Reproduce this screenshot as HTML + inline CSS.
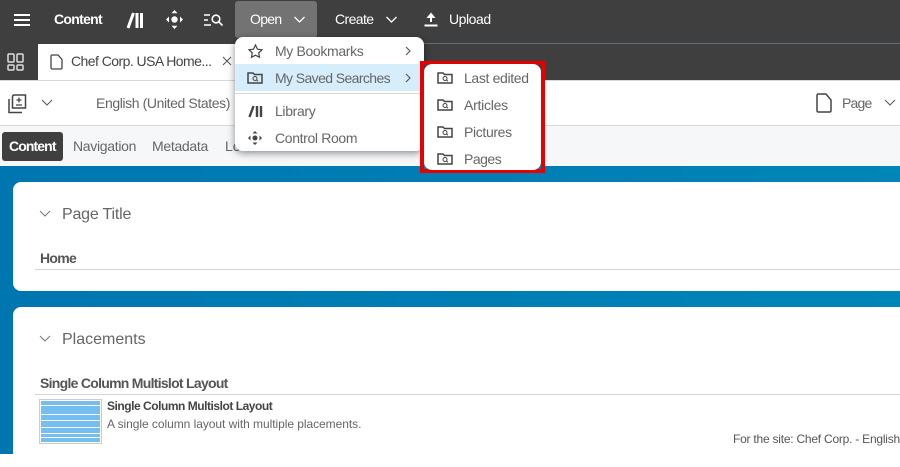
<!DOCTYPE html>
<html><head><meta charset="utf-8"><style>
html,body{margin:0;padding:0}
body{width:900px;height:454px;overflow:hidden;position:relative;background:#fff;font-family:"Liberation Sans",sans-serif;font-size:14px;color:#555}
.a{position:absolute;white-space:nowrap}
.t{position:absolute;white-space:nowrap;line-height:18px}
svg{position:absolute;overflow:visible}
.w{color:#fff}
.m{color:#666;font-size:14px;letter-spacing:-.35px}
</style></head><body>
<div class="a" style="left:0;top:0;width:900px;height:80px;background:#3f3f3f"></div>
<div class="a" style="left:240px;top:43px;width:660px;height:1px;background:#5f6f7c"></div>
<div class="a" style="left:38px;top:44px;width:205px;height:37px;background:#fff"></div>
<div class="a" style="left:0;top:80px;width:900px;height:1px;background:#d8d8d8"></div>
<div class="a" style="left:0;top:125px;width:900px;height:1px;background:#d8d8d8"></div>
<div class="a" style="left:0;top:126px;width:900px;height:40px;background:#f6f7f9"></div>
<div class="a" style="left:0;top:166px;width:900px;height:288px;background:linear-gradient(90deg,#0076b0,#0085b8)"></div>
<div class="a" style="left:13px;top:182px;width:900px;height:109px;background:#fff;border-radius:8px"></div>
<div class="a" style="left:13px;top:307px;width:900px;height:160px;background:#fff;border-radius:8px"></div>

<svg style="left:13px;top:13px" width="18" height="14" fill="none" stroke="#fff" stroke-width="2"><path d="M1 2H17M1 7H17M1 12H17"/></svg>
<div class="t w" style="left:54px;top:10px;font-weight:bold;letter-spacing:-.7px">Content</div>
<svg style="left:126px;top:10px" width="18" height="20" fill="none" stroke="#fff" stroke-width="3"><path d="M2 18L7.500 3M11 3V18M15.500 3V18"/></svg>
<svg style="left:166px;top:10px" width="17" height="19" fill="#fff"><circle cx="8.500" cy="9.500" r="3.200"/><path d="M8.500 0L11.500 3.200H5.500ZM8.500 19L5.500 15.800H11.500ZM0 9.500L3 6.500V12.500ZM17 9.500L14 12.500V6.500Z"/></svg>
<svg style="left:204px;top:13px" width="19" height="14" fill="none" stroke="#fff" stroke-width="1.600"><path d="M0 2H6M0 7H4M0 12H7"/><circle cx="12" cy="6" r="3.800"/><path d="M15 9L18.500 12.500"/></svg>
<div class="a" style="left:235px;top:1px;width:82px;height:37px;background:#737373;border-radius:3px"></div>
<div class="t w" style="left:250px;top:10px;letter-spacing:-.7px">Open</div>
<svg style="left:294px;top:16px" width="11" height="8" fill="none" stroke="#fff" stroke-width="1.300"><path d="M.5 1L5.500 6L10.500 1"/></svg>
<div class="t w" style="left:335px;top:10px;letter-spacing:-.6px">Create</div>
<svg style="left:386px;top:16px" width="11" height="8" fill="none" stroke="#fff" stroke-width="1.300"><path d="M.5 1L5.500 6L10.500 1"/></svg>
<svg style="left:424px;top:12px" width="14" height="15" fill="none" stroke="#fff" stroke-width="2"><path d="M7 2V10M0.500 13.500H13.500"/><path d="M7 0.500L11.500 6H2.500Z" fill="#fff" stroke="none"/></svg>
<div class="t w" style="left:449px;top:10px;letter-spacing:-.45px">Upload</div>

<svg style="left:7px;top:53px" width="17" height="18" fill="none" stroke="#ddd" stroke-width="1.500"><rect x="1" y="1" width="6" height="8" rx="1"/><rect x="10" y="1" width="6" height="8" rx="1"/><rect x="1" y="12" width="6" height="5" rx="1"/><rect x="10" y="12" width="6" height="5" rx="1"/></svg>
<svg style="left:50px;top:54px" width="13" height="16" fill="none" stroke="#444" stroke-width="1.300"><path d="M1 2.500Q1 1 2.500 1H8L12 5.500V13.500Q12 15 10.500 15H2.500Q1 15 1 13.500Z"/></svg>
<div class="t" style="left:71px;top:52px;color:#444;letter-spacing:-.55px">Chef Corp. USA Home...</div>
<svg style="left:222px;top:56px" width="10" height="10" fill="none" stroke="#555" stroke-width="1"><path d="M1 1L9 9M9 1L1 9"/></svg>

<svg style="left:8px;top:94px" width="19" height="20" fill="none" stroke="#444" stroke-width="1.500"><path d="M4.500 3Q4.500 1 6.500 1H17.500V14H4.500ZM1 5V18.500H14"/><path d="M11 3.500V8.500M8.500 6H13.500M8 11H14" stroke-width="1.300"/></svg>
<svg style="left:41px;top:99px" width="12" height="8" fill="none" stroke="#555" stroke-width="1"><path d="M1 1L6 6L11 1"/></svg>
<div class="t" style="left:96px;top:94px;color:#666;letter-spacing:-.4px">English (United States)</div>
<svg style="left:816px;top:93px" width="16" height="20" fill="none" stroke="#444" stroke-width="1.500"><path d="M1 2.500Q1 1 2.500 1H10L15 7V17.500Q15 19 13.500 19H2.500Q1 19 1 17.500Z"/></svg>
<div class="t" style="left:842px;top:94px;color:#666;letter-spacing:-.8px">Page</div>
<svg style="left:884px;top:99px" width="12" height="8" fill="none" stroke="#555" stroke-width="1"><path d="M1 1L6 6L11 1"/></svg>

<div class="a" style="left:2px;top:132px;width:61px;height:29px;background:#3f3f3f;border-radius:3px"></div>
<div class="t w" style="left:9px;top:137px;font-weight:bold;letter-spacing:-.9px">Content</div>
<div class="t" style="left:73px;top:137px;color:#666;letter-spacing:-.3px">Navigation</div>
<div class="t" style="left:152px;top:137px;color:#666;letter-spacing:-.3px">Metadata</div>
<div class="t" style="left:225px;top:137px;color:#666">Lo</div>

<svg style="left:39px;top:210px" width="12" height="7" fill="none" stroke="#777" stroke-width="1"><path d="M1 1L6 6L11 1"/></svg>
<div class="t" style="left:62px;top:206px;font-size:16px;color:#666;letter-spacing:-.2px">Page Title</div>
<div class="t" style="left:40px;top:249px;font-weight:bold;color:#555;letter-spacing:-.7px">Home</div>
<div class="a" style="left:35px;top:269px;width:865px;height:1px;background:#d5d5d5"></div>

<svg style="left:39px;top:335px" width="12" height="7" fill="none" stroke="#777" stroke-width="1"><path d="M1 1L6 6L11 1"/></svg>
<div class="t" style="left:62px;top:331px;font-size:16px;color:#666">Placements</div>
<div class="t" style="left:40px;top:374px;font-weight:bold;color:#555;letter-spacing:-.72px">Single Column Multislot Layout</div>
<div class="a" style="left:35px;top:394px;width:865px;height:1px;background:#d5d5d5"></div>
<svg style="left:39px;top:399px" width="63" height="46"><rect x=".5" y=".5" width="62" height="44" fill="#fff" stroke="#ccc"/><g fill="#74bef2"><rect x="2" y="2" width="59" height="4"/><rect x="2" y="7" width="59" height="8"/><rect x="2" y="16" width="59" height="5"/><rect x="2" y="22" width="59" height="6"/><rect x="2" y="29" width="59" height="5"/><rect x="2" y="35" width="59" height="3"/><rect x="2" y="39" width="59" height="4"/></g></svg>
<div class="t" style="left:107px;top:397px;font-size:12px;font-weight:bold;color:#444;letter-spacing:-.47px">Single Column Multislot Layout</div>
<div class="t" style="left:107px;top:415px;font-size:12px;color:#666;letter-spacing:-.05px">A single column layout with multiple placements.</div>
<div class="t" style="left:733px;top:430px;font-size:12px;color:#555;letter-spacing:-.23px">For the site: Chef Corp. - English</div>

<div class="a" style="left:235px;top:37px;width:189px;height:114px;background:#fff;border-radius:8px;box-shadow:0 2px 8px rgba(0,0,0,.45)"></div>
<div class="a" style="left:235px;top:64px;width:189px;height:27px;background:#d6edfc"></div>
<div class="a" style="left:235px;top:93px;width:189px;height:1px;background:#d8d8d8"></div>
<svg style="left:248px;top:44px" width="15" height="14" fill="none" stroke="#444" stroke-width="1.200"><path d="M7.500 1L9.500 5.200L14 5.800L10.700 8.900L11.500 13.300L7.500 11.200L3.500 13.300L4.300 8.900L1 5.800L5.500 5.200Z"/></svg>
<div class="t m" style="left:275px;top:42px">My Bookmarks</div>
<svg style="left:405px;top:46px" width="6" height="10" fill="none" stroke="#555" stroke-width="1.100"><path d="M1 1L5 5L1 9"/></svg>
<svg style="left:247px;top:72px" width="16" height="12" fill="none" stroke="#444" stroke-width="1.500"><path d="M1 1H6L7.500 2.500H15V11H1Z"/><circle cx="8" cy="6.500" r="2" stroke-width="1"/><path d="M9.500 8L11 9.300" stroke-width="1"/></svg>
<div class="t m" style="left:275px;top:69px;letter-spacing:-.6px">My Saved Searches</div>
<svg style="left:405px;top:73px" width="6" height="10" fill="none" stroke="#555" stroke-width="1.100"><path d="M1 1L5 5L1 9"/></svg>
<svg style="left:248px;top:104px" width="15" height="14" fill="none" stroke="#444" stroke-width="2.400"><path d="M1.500 13L5.500 2M9 2V13M13 2V13"/></svg>
<div class="t m" style="left:275px;top:102px">Library</div>
<svg style="left:248px;top:131px" width="14" height="14" fill="#444"><circle cx="7" cy="7" r="2.500"/><path d="M7 0L9.500 2.500H4.500ZM7 14L4.500 11.500H9.500ZM0 7L2.500 4.500V9.500ZM14 7L11.500 9.500V4.500Z"/></svg>
<div class="t m" style="left:275px;top:129px">Control Room</div>

<div class="a" style="left:420px;top:61px;width:125px;height:112px;box-sizing:border-box;border:4px solid #e60000;background:linear-gradient(#3f3f3f 0 50%,#0080b5 50%)"></div>
<div class="a" style="left:424px;top:64px;width:117px;height:106px;background:#fff;border-radius:8px"></div>
<svg style="left:437px;top:72px" width="16" height="12" fill="none" stroke="#444" stroke-width="1.500"><path d="M1 1H6L7.500 2.500H15V11H1Z"/><circle cx="8" cy="6.500" r="2" stroke-width="1"/><path d="M9.500 8L11 9.300" stroke-width="1"/></svg>
<div class="t m" style="left:464px;top:69px">Last edited</div>
<svg style="left:437px;top:99px" width="16" height="12" fill="none" stroke="#444" stroke-width="1.500"><path d="M1 1H6L7.500 2.500H15V11H1Z"/><circle cx="8" cy="6.500" r="2" stroke-width="1"/><path d="M9.500 8L11 9.300" stroke-width="1"/></svg>
<div class="t m" style="left:464px;top:96px;letter-spacing:-.25px">Articles</div>
<svg style="left:437px;top:126px" width="16" height="12" fill="none" stroke="#444" stroke-width="1.500"><path d="M1 1H6L7.500 2.500H15V11H1Z"/><circle cx="8" cy="6.500" r="2" stroke-width="1"/><path d="M9.500 8L11 9.300" stroke-width="1"/></svg>
<div class="t m" style="left:464px;top:123px">Pictures</div>
<svg style="left:437px;top:153px" width="16" height="12" fill="none" stroke="#444" stroke-width="1.500"><path d="M1 1H6L7.500 2.500H15V11H1Z"/><circle cx="8" cy="6.500" r="2" stroke-width="1"/><path d="M9.500 8L11 9.300" stroke-width="1"/></svg>
<div class="t m" style="left:464px;top:150px;letter-spacing:-.5px">Pages</div>
</body></html>
